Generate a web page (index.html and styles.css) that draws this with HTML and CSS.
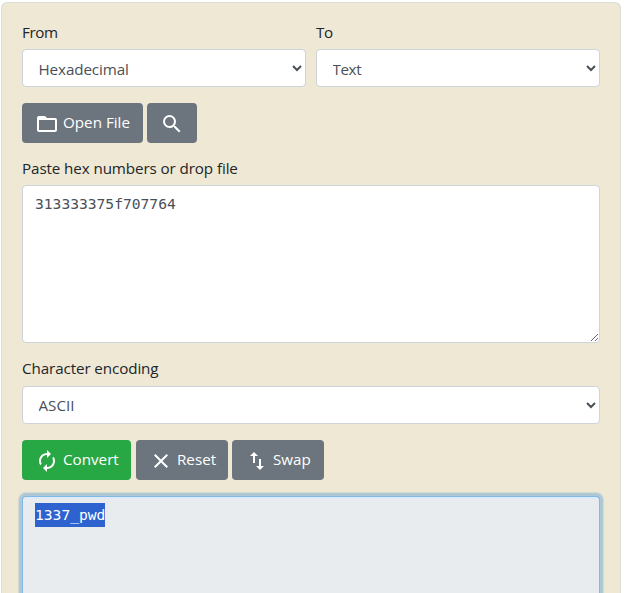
FILE: index.html
```html
<!DOCTYPE html>
<html lang="en">
<head>
<meta charset="utf-8">
<title>Hex to Text Converter</title>
<link rel="stylesheet" href="styles.css">
</head>
<body>
<form class="card">
  <div class="row">
    <div class="field">
      <label class="tight" for="from">From</label>
      <select id="from" class="control"><option>Hexadecimal</option></select>
    </div>
    <div class="field">
      <label class="tight" for="to">To</label>
      <select id="to" class="control tight"><option>Text</option></select>
    </div>
  </div>
  <div class="buttons files">
    <button type="button" class="btn open"><svg width="24" height="24" viewBox="0 0 24 24"><path d="M20 6h-8l-2-2H4c-1.1 0-1.99.9-1.99 2L2 18c0 1.1.9 2 2 2h16c1.1 0 2-.9 2-2V8c0-1.1-.9-2-2-2zm0 12H4V8h16v10z"/></svg><span>Open File</span></button>
    <button type="button" class="btn search" aria-label="Search"><svg width="24" height="24" viewBox="0 0 24 24"><path d="M15.5 14h-.79l-.28-.27A6.47 6.47 0 0 0 16 9.5 6.5 6.5 0 1 0 9.5 16c1.61 0 3.09-.59 4.23-1.57l.27.28v.79l5 4.99L20.49 19l-4.99-5zm-6 0C7.01 14 5 11.99 5 9.5S7.01 5 9.5 5 14 7.01 14 9.5 11.99 14 9.5 14z"/></svg></button>
  </div>
  <label for="input">Paste hex numbers or drop file</label>
  <textarea id="input" class="control input" spellcheck="false">313333375f707764</textarea>
  <label class="encoding-label" for="encoding">Character encoding</label>
  <select id="encoding" class="control encoding"><option>ASCII</option></select>
  <div class="buttons actions">
    <button type="button" class="btn convert"><svg width="24" height="24" viewBox="0 0 24 24"><path d="M12 6v3l4-4-4-4v3c-4.42 0-8 3.58-8 8 0 1.57.46 3.03 1.24 4.26L6.7 14.8A5.87 5.87 0 0 1 6 12c0-3.31 2.69-6 6-6zm6.76 1.74L17.3 9.2c.44.84.7 1.79.7 2.8 0 3.31-2.69 6-6 6v-3l-4 4 4 4v-3c4.42 0 8-3.58 8-8 0-1.57-.46-3.03-1.24-4.26z"/></svg><span>Convert</span></button>
    <button type="button" class="btn reset"><svg width="24" height="24" viewBox="0 0 24 24"><path d="M19 6.41L17.59 5 12 10.59 6.41 5 5 6.41 10.59 12 5 17.59 6.41 19 12 13.41 17.59 19 19 17.59 13.41 12z"/></svg><span>Reset</span></button>
    <button type="button" class="btn swap"><svg width="24" height="24" viewBox="0 0 24 24"><path d="M16 17.01V10h-2v7.01h-3L15 21l4-3.99h-3zM9 3L5 6.99h3V14h2V6.99h3L9 3z"/></svg><span>Swap</span></button>
  </div>
  <div class="output"><span class="selected">1337_pwd</span></div>
</form>
</body>
</html>
```
FILE: styles.css
```css
* { box-sizing: border-box; }
body {
  margin: 0;
  height: 593px;
  overflow: hidden;
  padding: 2px 3px 0 1px;
  background: #fff;
  color: #212529;
  font: 15.2px/24px "Open Sans", "Noto Sans", sans-serif;
  letter-spacing: -0.1px;
}
.card {
  display: flex;
  flex-direction: column;
  height: 591px;
  padding: 17px 20px 0;
  border: 1px solid #dcdcd8;
  border-bottom: 0;
  border-radius: 6px 6px 0 0;
  background: #eee8d5;
}
.row { display: flex; gap: 10px; }
.field { flex: 1; min-width: 0; }
label { display: block; height: 24px; margin-bottom: 5px; white-space: nowrap; }
.encoding-label { margin-bottom: 6px; }
.control {
  display: block;
  flex: none;
  width: 100%;
  height: 38px;
  margin: 0;
  padding: 6px 12px;
  border: 1px solid #ced4da;
  border-radius: 4px;
  background: #fff;
  color: #495057;
  font: inherit;
  letter-spacing: inherit;
  outline: none;
}
select.control { padding: 7px 2px 5px 11.5px; }
select.encoding { padding-top: 5px; padding-bottom: 6px; letter-spacing: 0; }
label.tight, select.tight { letter-spacing: -0.4px; }
.buttons { display: flex; flex: none; }
.files { gap: 4px; margin: 16px 0 13px; }
.actions { gap: 4px; margin: 16px 0; }
.btn {
  display: flex;
  align-items: center;
  height: 40px;
  padding: 0 0 0 13px;
  border: 0;
  border-radius: 4px;
  background: #6c757d;
  color: #fff;
  font: inherit;
  white-space: nowrap;
}
.btn svg { flex: none; margin: 2px 4px 0 0; fill: currentColor; }
.btn span { padding-bottom: 2px; }
.open { width: 121px; }
.search { width: 50px; }
.convert { width: 109px; margin-right: 1px; background: #28a745; }
.reset { width: 92px; }
.swap { width: 92px; }
.input {
  height: 158px;
  margin-bottom: 13px;
  font: 14.62px/24px "DejaVu Sans Mono", monospace;
  letter-spacing: 0;
}
.output {
  flex: 1;
  padding: 6px 12px 0;
  border: 1px solid #80b9e5;
  border-bottom: 0;
  border-radius: 4px 4px 0 0;
  background: #e9ecef;
  box-shadow: inset 0 3px 1px -1px #dfebf8, 0 0 0 3px #aec8d6, 0 0 1px 4px #d4dad4;
  font: 14.62px/24px "DejaVu Sans Mono", monospace;
  letter-spacing: 0;
}
.selected { display: inline-block; height: 24px; background: #2e62ce; color: #fff; }
```
